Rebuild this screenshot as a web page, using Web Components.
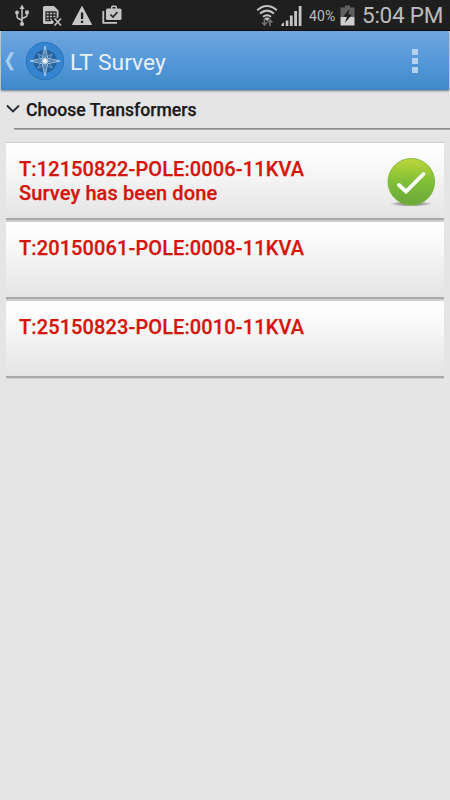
<!DOCTYPE html>
<html lang="en">
<head>
<meta charset="utf-8">
<title>LT Survey</title>
<style>
html,body{margin:0;height:100%;background:#e5e5e5;font-family:Roboto,"Noto Sans",sans-serif;overflow:hidden}
</style>
</head>
<body>
<survey-app></survey-app>
<script>
const define = (name, html) => customElements.define(name, class extends HTMLElement {
  constructor() {
    super();
    const t = document.createElement('template');
    t.innerHTML = html;
    this.attachShadow({mode: 'open'}).append(t.content.cloneNode(true));
  }
});

define('status-bar', `
<style>
:host{display:flex;height:30px;background:#1f1f1f;border-bottom:1px solid #050505;color:#bcbcbc;box-sizing:content-box;white-space:nowrap}
svg{display:block;flex:none}
.pct{font-size:14px;line-height:32px;width:27px;margin-left:6px;letter-spacing:.1px}
.time{font-size:22.5px;line-height:31px;margin-left:6px;letter-spacing:-.25px}
</style>
<svg width="130" height="30" viewBox="0 0 130 30">
  <g fill="none" stroke="#c4c4c4" stroke-width="1.5">
    <path d="M22 8V23M17 12.500V16.500Q17 18 18.500 18.500L22 20.500M27 12.500V15Q27 16.500 25.500 17L22 18.500"/>
  </g>
  <g fill="#c4c4c4"><path d="M22 4.500L24.500 9H19.500Z"/><circle cx="17" cy="12.500" r="1.900"/><rect x="25.200" y="10.500" width="3.600" height="3.600"/><circle cx="22" cy="24" r="2.100"/></g>
  <path d="M43 7.500Q43 6 44.500 6H54L58.500 10.500V17L56.500 19L54 17L51.500 19.500L54 22L52.500 24H44.500Q43 24 43 22.500Z" fill="#c4c4c4"/>
  <path d="M46 12H56V18H46ZM46 15H56M49.300 12V21M52.700 12V19M46 18V20.500H51" fill="none" stroke="#292929" stroke-width="1.300"/>
  <path d="M54.500 18.500L61 25.500M61 18.500L54.500 25.500" stroke="#c4c4c4" stroke-width="1.700"/>
  <path d="M82 6.500L91.500 24.500H72.500Z" fill="#c8c8c8" stroke="#c8c8c8" stroke-linejoin="round"/>
  <path d="M80.900 12.500H83.200V19H80.900ZM80.900 20.800H83.200V23H80.900Z" fill="#1f1f1f"/>
  <path d="M103.300 11V22.800H117" fill="none" stroke="#c4c4c4" stroke-width="1.800"/>
  <path d="M107.500 8.500H111V7Q111 5.500 112.500 5.500H115.500Q117 5.500 117 7V8.500H120Q121.500 8.500 121.500 10V18.500Q121.500 20 120 20H107.500Q106 20 106 18.500V10Q106 8.500 107.500 8.500ZM112.500 8.500H115.500V7H112.500Z" fill="#c4c4c4" fill-rule="evenodd"/>
  <path d="M110.500 14.500L113 17L117.500 12" fill="none" stroke="#222" stroke-width="1.600"/>
</svg>
<svg width="173" height="30" viewBox="130 0 173 30">
  <g fill="none" stroke="#c4c4c4" stroke-width="2">
    <path d="M257.200 10.200Q267 1.800 276.800 10.200M260 13.500Q267 7.700 274 13.500M263 16.700Q267 13.700 271 16.700"/>
  </g>
  <path d="M264.200 18.200Q267 16.600 269.800 18.200L267 21Z" fill="#c4c4c4"/>
  <path d="M264.500 19V24M262.200 22.500L264.500 25L266.800 22.500M270 26V20.500M267.700 22.500L270 20L272.300 22.500" fill="none" stroke="#707070" stroke-width="1.700"/>
  <g fill="#c4c4c4"><path d="M281.500 26V24L284 22.500V26ZM285.700 26V20.500H288.400V26ZM289.900 26V15.500H292.700V26ZM294.200 26V11H297V26ZM298.700 26V6H301.500V26Z"/></g>
</svg>
<span class="pct">40%</span>
<svg width="20" height="30" viewBox="336 0 20 30">
  <path d="M340.500 7.500H345V5.500H350V7.500H354.500V17H340.500Z" fill="#606060"/>
  <path d="M340.500 17H354.500V25.500H340.500Z" fill="#cecece"/>
  <path d="M349.500 9L343.200 16.800H347L344.800 23L352 14.500H348.300Z" fill="#1c1c1c"/>
</svg>
<span class="time">5:04 PM</span>
`);

define('app-bar', `
<style>
:host{display:flex;align-items:center;height:59px;margin:0 1px;background:linear-gradient(#70a6de,#5699da 48%,#428bc9 97%,#3f80bd);box-shadow:0 1px 2px #6f7d8b;color:#e8f0f8;position:relative}
.title{font-size:22.8px;line-height:30px;margin:5px 0 0 5px;flex:1;white-space:nowrap}
svg{display:block;flex:none}
.menu{display:grid;gap:3px;margin:1px 31px 0 0}
.menu i{width:6px;height:6px;background:#b4d1ee}
</style>
<svg width="64" height="59" viewBox="1 31 64 59">
  <path d="M10.300 52.300H14L9.200 61.300L14 70.200H10.300L5.500 61.300Z" fill="#a9cdf0"/>
  <circle cx="45" cy="61" r="18.700" fill="#3484cf" stroke="#2c75b9"/>
  <circle cx="45" cy="61" r="11.500" fill="#28629d"/>
  <g fill="none" stroke="#8db7db" stroke-width=".7">
    <path d="M38 54L45 57.500L52 54L48.500 61L52 68L45 64.500L38 68L41.500 61Z"/>
    <path d="M45 46L47.700 58.300L60 61L47.700 63.700L45 76L42.300 63.700L30 61L42.300 58.300Z" stroke="#d2e3f2"/>
  </g>
  <path d="M45 47V75M31 61H59" stroke="#a9c9e4" stroke-width=".7"/>
  <circle cx="45" cy="61" r="3.200" fill="#a9c9e6"/><circle cx="45" cy="61" r="1.900" fill="#fff"/>
</svg>
<div class="title"><slot></slot></div>
<div class="menu"><i></i><i></i><i></i></div>
`);

define('section-header', `
<style>
:host{display:flex;flex-direction:column;height:52px;color:#1a1a1a}
.row{display:flex;align-items:center;height:38px}
svg{display:block;margin:0 5px 0 6px}
span{font-size:17.600px;font-weight:500;-webkit-text-stroke:.25px #1a1a1a;line-height:24px;margin-top:2px;white-space:nowrap}
hr{border:0;margin:0 0 0 14px;height:2px;background:linear-gradient(#8b8b8b 50%,#aaa 50%)}
</style>
<div class="row">
<svg width="15" height="12" viewBox="0 0 15 12"><path d="M1 2.500L7 8.500L13 2.500" fill="none" stroke="#252b33" stroke-width="1.900"/></svg>
<span><slot></slot></span>
</div><hr>
`);

define('transformer-card', `
<style>
:host{display:flex;align-items:center;justify-content:space-between;box-sizing:border-box;height:78px;margin:0 6px 1px;border-top:1px solid #cdd0c6;border-bottom:2px solid #a9a9a9;background:linear-gradient(#fff,#fafafa 25%,#e4e4e4);background-clip:padding-box;box-shadow:0 1px #cfcfcf;color:#d3150b}
.text{font-size:20px;font-weight:500;letter-spacing:.11px;-webkit-text-stroke:.25px #d3150b;line-height:24px;padding:14px 0 0 13px;align-self:flex-start;white-space:nowrap}
</style>
<div class="text"><slot></slot></div><slot name="badge"></slot>
`);

define('done-badge', `
<style>:host{display:block;margin:2px 8px 0 0}svg{display:block}</style>
<svg width="50" height="52" viewBox="386 155 50 52">
  <defs>
    <linearGradient id="g" x2="0" y2="1"><stop stop-color="#bfd63a"/><stop offset=".5" stop-color="#80bf37"/><stop offset="1" stop-color="#69a83a"/></linearGradient>
    <radialGradient id="s"><stop stop-color="#666"/><stop offset=".65" stop-color="#999" stop-opacity=".7"/><stop offset="1" stop-color="#bbb" stop-opacity="0"/></radialGradient>
  </defs>
  <ellipse cx="411" cy="202.800" rx="22" ry="3" fill="url(#s)"/>
  <circle cx="411.300" cy="180.800" r="23.300" fill="url(#g)" stroke="#79b536" stroke-width=".9"/>
  <path d="M399 184L406 190.500L423.500 173" fill="none" stroke="#fff" stroke-width="3.800" stroke-linecap="round"/>
</svg>
`);

define('survey-app', `
<style>
:host{display:block;height:100vh}
.list{display:block}
</style>
<status-bar></status-bar>
<app-bar>LT Survey</app-bar>
<section-header>Choose Transformers</section-header>
<div class="list">
<transformer-card>T:12150822-POLE:0006-11KVA<br>Survey has been done<done-badge slot="badge"></done-badge></transformer-card>
<transformer-card>T:20150061-POLE:0008-11KVA</transformer-card>
<transformer-card>T:25150823-POLE:0010-11KVA</transformer-card>
</div>
`);
</script>
</body>
</html>
